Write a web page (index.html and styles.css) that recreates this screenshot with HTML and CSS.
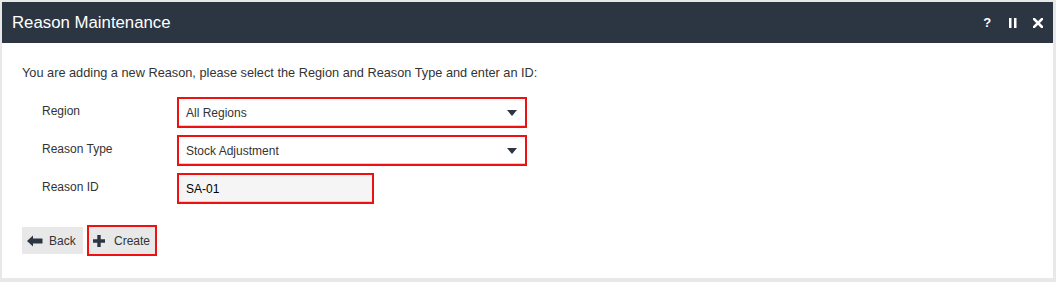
FILE: index.html
```html
<!DOCTYPE html>
<html>
<head>
<meta charset="utf-8">
<link rel="stylesheet" href="styles.css">
</head>
<body>
<div class="panel">
  <div class="header">
    <div class="title">Reason Maintenance</div>
    <div class="tools">
      <span class="tool">?</span>
      <span class="tool pause"><svg width="8" height="10" viewBox="0 0 8 10"><rect x="0" y="0" width="2.5" height="10" fill="#fff"/><rect x="5" y="0" width="2.5" height="10" fill="#fff"/></svg></span>
      <span class="tool close"><svg width="10" height="10" viewBox="0 0 10 10"><path d="M1 1L9 9M9 1L1 9" stroke="#fff" stroke-width="2.6" stroke-linecap="square"/></svg></span>
    </div>
  </div>
  <div class="body">
    <p class="intro">You are adding a new Reason, please select the Region and Reason Type and enter an ID:</p>
    <div class="form">
      <div class="row">
        <div class="label">Region</div>
        <div class="field select">
          <span>All Regions</span>
          <svg class="caret" width="10" height="6" viewBox="0 0 10 6"><path d="M0 0H10L5 6Z" fill="#2c3643"/></svg>
        </div>
      </div>
      <div class="row">
        <div class="label">Reason Type</div>
        <div class="field select">
          <span>Stock Adjustment</span>
          <svg class="caret" width="10" height="6" viewBox="0 0 10 6"><path d="M0 0H10L5 6Z" fill="#2c3643"/></svg>
        </div>
      </div>
      <div class="row">
        <div class="label">Reason ID</div>
        <div class="field input"><span>SA-01</span></div>
      </div>
    </div>
    <div class="buttons">
      <div class="btn back">
        <svg width="16" height="12" viewBox="0 0 16 12"><path d="M0 6L6 0.5V3.5H15.5V8.5H6V11.5Z" fill="#2c3643"/></svg>
        <span>Back</span>
      </div>
      <div class="btn create">
        <svg width="12" height="12" viewBox="0 0 12 12"><path d="M4.3 0H7.7V4.3H12V7.7H7.7V12H4.3V7.7H0V4.3H4.3Z" fill="#2c3643"/></svg>
        <span>Create</span>
      </div>
    </div>
  </div>
</div>
</body>
</html>
```
FILE: styles.css
```css
html, body {
  margin: 0;
  padding: 0;
}
body {
  background: #e8e8e8;
  padding: 2px 3px 4px 2px;
  font-family: "Liberation Sans", Arial, sans-serif;
  color: #333;
}
.panel {
  width: 1051px;
  height: 276px;
  background: #fff;
  box-sizing: border-box;
}
.header {
  height: 41px;
  background: #2c3643;
  display: flex;
  align-items: center;
  justify-content: space-between;
  padding: 0 2px 0 10px;
}
.title {
  color: #fff;
  font-size: 16.8px;
}
.tools {
  display: flex;
  align-items: center;
}
.tool {
  color: #fff;
  font-weight: bold;
  font-size: 13px;
  width: 25.5px;
  display: flex;
  justify-content: center;
  align-items: center;
}
.body {
  padding: 22px 20px 0 20px;
}
.intro {
  margin: 0;
  font-size: 12.75px;
  line-height: 15px;
}
.form {
  margin-top: 17px;
  display: flex;
  flex-direction: column;
  gap: 7px;
}
.row {
  display: flex;
  align-items: center;
}
.label {
  width: 135px;
  padding-left: 20px;
  font-size: 12px;
  margin-top: -3px;
}
.field {
  box-sizing: border-box;
  border: 2px solid #ee1111;
  height: 31px;
  display: flex;
  align-items: center;
  padding-left: 7px;
  font-size: 12px;
  box-shadow: inset 0 -1px 0 #d4d4d4;
}
.select {
  width: 350px;
  background: #fff;
  justify-content: space-between;
  padding-right: 8px;
}
.input {
  width: 197px;
  background: #f5f5f5;
  color: #000;
}
.caret {
  display: block;
}
.buttons {
  margin-top: 21px;
  display: flex;
  align-items: center;
  gap: 4px;
}
.btn {
  box-sizing: border-box;
  background: #e8e8e8;
  display: flex;
  align-items: center;
  font-size: 12px;
  color: #333;
}
.back {
  width: 61px;
  height: 27px;
  padding-left: 5px;
  gap: 6px;
}
.create {
  width: 70px;
  height: 31px;
  border: 2px solid #ee1111;
  padding-left: 4px;
  gap: 9px;
}
```
